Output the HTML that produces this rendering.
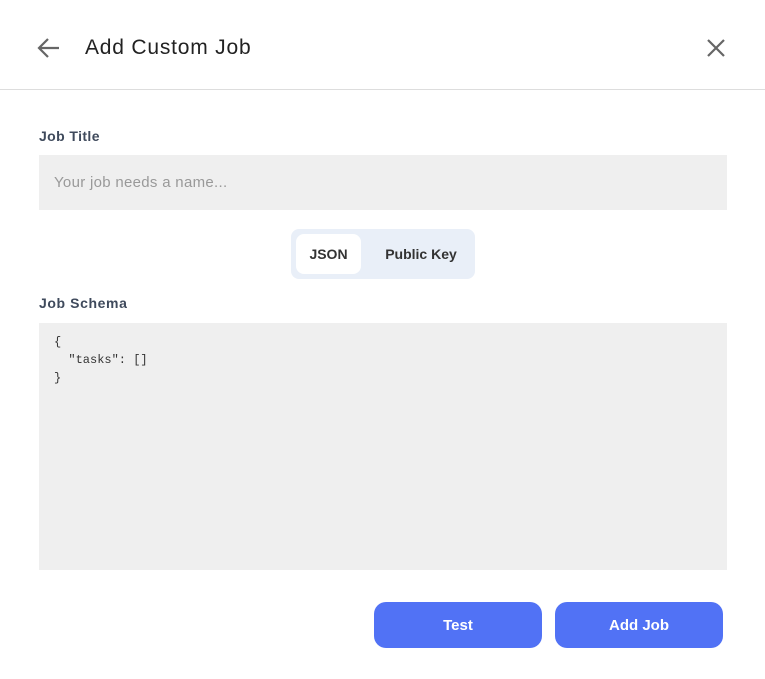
<!DOCTYPE html>
<html><head><style>
body{margin:0;width:765px;height:679px;background:#fff;font-family:"Liberation Sans",sans-serif;position:relative;overflow:hidden}
.a{position:absolute}
</style></head><body>
<svg class="a" style="left:36px;top:36px" width="26" height="24" viewBox="0 0 26 24"><path d="M23 12H4M12 3L3 12l9 9" fill="none" stroke="#666" stroke-width="2.2"/></svg>
<div class="a" style="left:85px;top:36px;font-size:21px;color:#222;letter-spacing:0.8px">Add Custom Job</div>
<svg class="a" style="left:706px;top:38px" width="20" height="20" viewBox="0 0 20 20"><path d="M2 2L18 18M18 2L2 18" stroke="#666" stroke-width="2.2"/></svg>
<div class="a" style="left:0;top:89px;width:765px;height:1px;background:#ddd"></div>
<div class="a" style="left:39px;top:128px;font-size:14px;font-weight:bold;color:#3f4a5c;letter-spacing:0.4px">Job Title</div>
<div class="a" style="left:39px;top:155px;width:688px;height:55px;background:#efefef"></div>
<div class="a" style="left:54px;top:174px;font-size:15px;color:#999;letter-spacing:0.3px">Your job needs a name...</div>
<div class="a" style="left:291px;top:229px;width:184px;height:50px;background:#e9eff8;border-radius:8px"></div>
<div class="a" style="left:296px;top:234px;width:65px;height:40px;background:#fff;border-radius:8px;font-size:14px;font-weight:bold;color:#333;line-height:40px;text-align:center">JSON</div>
<div class="a" style="left:380px;top:234px;width:82px;line-height:40px;font-size:14px;font-weight:bold;color:#333;text-align:center">Public Key</div>
<div class="a" style="left:39px;top:295px;font-size:14px;font-weight:bold;color:#3f4a5c;letter-spacing:0.6px">Job Schema</div>
<div class="a" style="left:39px;top:323px;width:688px;height:247px;background:#efefef"></div>
<pre class="a" style="left:54px;top:333px;margin:0;font-family:'Liberation Mono',monospace;font-size:12px;line-height:18px;color:#333">{
  "tasks": []
}</pre>
<div class="a" style="left:374px;top:602px;width:168px;height:46px;background:#5172f5;border-radius:12px;color:#fff;font-size:15px;font-weight:bold;line-height:48px;text-align:center">Test</div>
<div class="a" style="left:555px;top:602px;width:168px;height:46px;background:#5172f5;border-radius:12px;color:#fff;font-size:15px;font-weight:bold;line-height:48px;text-align:center">Add Job</div>
</body></html>
